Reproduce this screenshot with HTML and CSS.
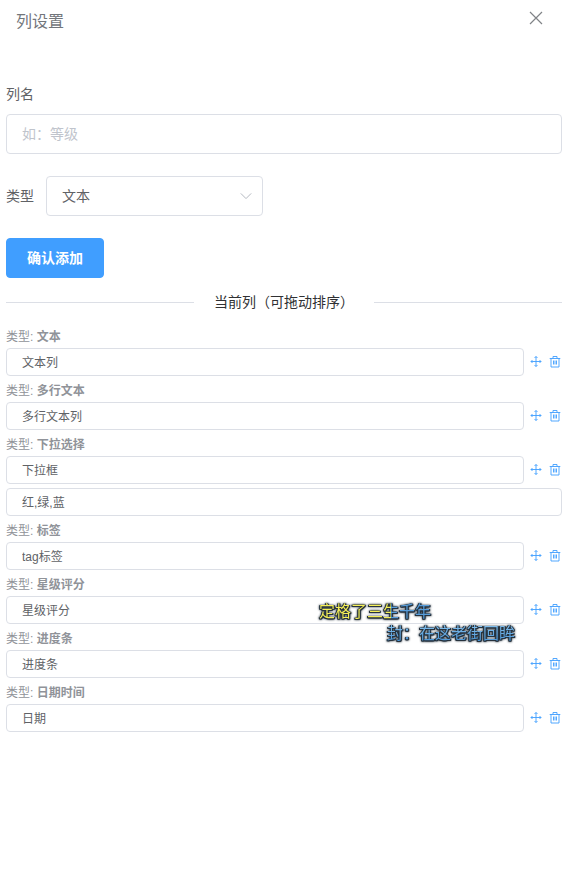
FILE: index.html
```html
<!DOCTYPE html>
<html lang="zh-CN">
<head>
<meta charset="utf-8">
<meta name="viewport" content="width=device-width, initial-scale=1">
<title>列设置</title>
<link rel="stylesheet" href="styles.css">
</head>
<body>
<svg class="sprite" aria-hidden="true">
  <symbol id="rank" viewBox="0 0 12 12"><path d="M1 5.5h10M6 .5v10M2.5 4L1 5.5 2.5 7M9.5 4L11 5.5 9.5 7M4.5 2L6 .5 7.5 2M4.5 9L6 10.5 7.5 9"/></symbol>
  <symbol id="trash" viewBox="0 0 12 12"><path d="M.7 2.5h10.6M4 2.5v-2h4v2M2 2.5v8.5h8v-8.5M4.5 4.5v4M6 4.5v4M7.5 4.5v4"/></symbol>
</svg>
<main class="drawer">
  <header class="header">
    <h1 class="title">列设置</h1>
    <button class="close" type="button" aria-label="关闭"><svg viewBox="0 0 14 14"><path d="M1 1l12 12M13 1L1 13"/></svg></button>
  </header>
  <form class="form">
    <div class="field">
      <label class="label" for="name">列名</label>
      <input class="input" id="name" type="text" placeholder="如：等级">
    </div>
    <div class="inline-field">
      <label class="label" for="type">类型</label>
      <div class="select-wrap">
        <select class="input select" id="type"><option>文本</option></select>
        <svg class="arrow" viewBox="0 0 12 12" aria-hidden="true"><path d="M.8 3.4L6 8.6l5.2-5.2"/></svg>
      </div>
    </div>
    <button class="submit" type="button">确认添加</button>
  </form>
  <h2 class="divider">当前列（可拖动排序）</h2>
  <ul class="columns">
    <li class="column">
      <label class="kind" for="c1">类型: <b>文本</b></label>
      <div class="row"><input class="input small" id="c1" type="text" value="文本列"><button class="icon" type="button" aria-label="拖动"><svg><use href="#rank"/></svg></button><button class="icon" type="button" aria-label="删除"><svg><use href="#trash"/></svg></button></div>
    </li>
    <li class="column">
      <label class="kind" for="c2">类型: <b>多行文本</b></label>
      <div class="row"><input class="input small" id="c2" type="text" value="多行文本列"><button class="icon" type="button" aria-label="拖动"><svg><use href="#rank"/></svg></button><button class="icon" type="button" aria-label="删除"><svg><use href="#trash"/></svg></button></div>
    </li>
    <li class="column">
      <label class="kind" for="c3">类型: <b>下拉选择</b></label>
      <div class="row"><input class="input small" id="c3" type="text" value="下拉框"><button class="icon" type="button" aria-label="拖动"><svg><use href="#rank"/></svg></button><button class="icon" type="button" aria-label="删除"><svg><use href="#trash"/></svg></button></div>
      <input class="input small choices" type="text" value="红,绿,蓝" aria-label="选项">
    </li>
    <li class="column">
      <label class="kind" for="c4">类型: <b>标签</b></label>
      <div class="row"><input class="input small" id="c4" type="text" value="tag标签"><button class="icon" type="button" aria-label="拖动"><svg><use href="#rank"/></svg></button><button class="icon" type="button" aria-label="删除"><svg><use href="#trash"/></svg></button></div>
    </li>
    <li class="column">
      <label class="kind" for="c5">类型: <b>星级评分</b></label>
      <div class="row"><input class="input small" id="c5" type="text" value="星级评分"><button class="icon" type="button" aria-label="拖动"><svg><use href="#rank"/></svg></button><button class="icon" type="button" aria-label="删除"><svg><use href="#trash"/></svg></button></div>
    </li>
    <li class="column">
      <label class="kind" for="c6">类型: <b>进度条</b></label>
      <div class="row"><input class="input small" id="c6" type="text" value="进度条"><button class="icon" type="button" aria-label="拖动"><svg><use href="#rank"/></svg></button><button class="icon" type="button" aria-label="删除"><svg><use href="#trash"/></svg></button></div>
    </li>
    <li class="column">
      <label class="kind" for="c7">类型: <b>日期时间</b></label>
      <div class="row"><input class="input small" id="c7" type="text" value="日期"><button class="icon" type="button" aria-label="拖动"><svg><use href="#rank"/></svg></button><button class="icon" type="button" aria-label="删除"><svg><use href="#trash"/></svg></button></div>
    </li>
  </ul>
</main>
<div class="lyrics">
  <p class="lyric sung">定格了三生千年</p>
  <p class="lyric next">封：在这老街回眸</p>
</div>
</body>
</html>
```
FILE: styles.css
```css
* { box-sizing: border-box; }
body {
  margin: 0;
  background: #fff;
  color: #606266;
  font-family: "Liberation Sans", "Noto Sans CJK SC", sans-serif;
  font-size: 14px;
}
button, input, select { font: inherit; }
svg { display: block; fill: none; stroke: currentColor; }
.sprite { display: none; }
.drawer { min-height: 100vh; padding: 0 8px 24px 6px; }

.header {
  display: flex;
  justify-content: space-between;
  height: 74px;
  padding: 8px 18px 0 10px;
  color: #72767b;
}
.title { margin: 0; font-size: 16px; font-weight: 400; line-height: 28px; }
.close {
  width: 16px;
  height: 20px;
  padding: 0;
  border: 0;
  background: none;
  color: #808387;
}
.close svg { width: 14px; height: 14px; margin: auto; stroke-width: 1.2; }

.form { display: flex; flex-direction: column; gap: 22px; }
.field { display: flex; flex-direction: column; }
.label { line-height: 40px; }
.input {
  width: 100%;
  height: 40px;
  padding: 0 15px;
  border: 1px solid #dcdfe6;
  border-radius: 4px;
  outline: 0;
  background: #fff;
  color: #606266;
}
.input::placeholder { color: #c0c4cc; }
.inline-field { display: flex; gap: 12px; }
.select-wrap { position: relative; width: 217px; }
.select { appearance: none; }
.arrow {
  position: absolute;
  top: 14px;
  right: 11px;
  width: 12px;
  height: 12px;
  color: #b4b8c0;
  pointer-events: none;
}
.submit {
  align-self: flex-start;
  height: 40px;
  padding: 0 20px 2px;
  border: 1px solid #409eff;
  border-radius: 4px;
  background: #409eff;
  color: #fff;
  font-weight: 700;
}

.divider {
  display: flex;
  align-items: center;
  gap: 20px;
  margin: 14px 0;
  color: #303133;
  font-size: 14px;
  font-weight: 400;
  line-height: 20px;
}
.divider::before, .divider::after {
  content: "";
  flex: 1;
  height: 1px;
  background: #dcdfe6;
}

.columns {
  display: flex;
  flex-direction: column;
  gap: 4px;
  margin: 0;
  padding: 0;
  list-style: none;
  font-size: 12px;
}
.kind { display: block; color: #909399; line-height: 22px; }
.row {
  display: grid;
  grid-template-columns: 1fr 12px 12px;
  align-items: center;
  column-gap: 7px;
}
.small { height: 28px; padding-bottom: 2px; }
.choices { display: block; margin-top: 4px; }
.icon {
  width: 12px;
  height: 12px;
  padding: 0;
  border: 0;
  background: none;
  color: #409eff;
}
.row .icon { margin-left: -1px; }
.icon svg { width: 12px; height: 12px; stroke-width: .9; }

.lyrics {
  position: absolute;
  top: 601px;
  left: 319px;
  font-size: 16px;
  line-height: 22px;
  pointer-events: none;
}
.lyric {
  width: max-content;
  margin: 0;
  background-clip: text;
  color: transparent;
  filter: drop-shadow(1px 0 0 #26323d) drop-shadow(-1px 0 0 #26323d) drop-shadow(0 1px 0 #26323d) drop-shadow(0 0 1px #26323d);
}
.sung { background-image: linear-gradient(90deg, #f5ef57 64%, #579ddb 64%); }
.next { margin-left: 68px; background-image: linear-gradient(#8ac6f2, #3f8bd0); }
```
